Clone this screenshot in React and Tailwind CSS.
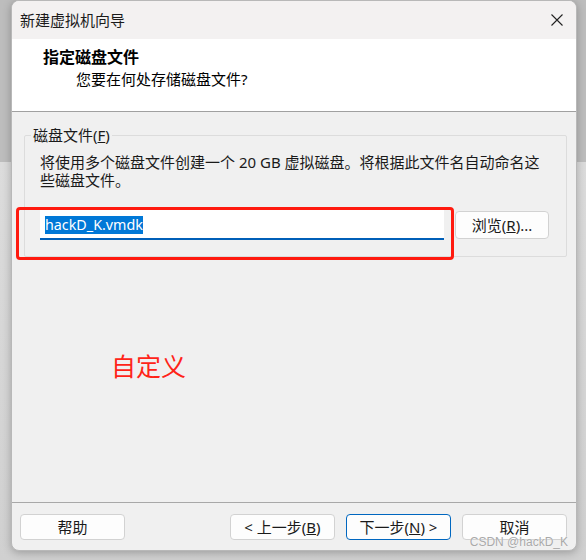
export default function App() {
  const font = { fontFamily: '"Noto Sans", "Noto Sans CJK SC", sans-serif' };
  return (
    <div
      className="w-[586px] h-[560px] overflow-hidden bg-[linear-gradient(to_bottom,#bdbdbd_162px,#dcdcdc_162px,#d0d0d0_100%)] pl-[11px]"
      style={font}
    >
      <div className="relative w-[566px] h-[551px] rounded-[8px] bg-[#f0f0f0] border border-[#b8b8b8] shadow-[0_2px_8px_rgba(0,0,0,0.25)] overflow-hidden flex flex-col text-[#1a1a1a]">
        {/* title bar */}
        <div className="h-[38px] shrink-0 bg-[#f3f1f1] flex items-center justify-between pl-[8px] pr-[13px]">
          <span className="text-[15px] leading-[18px] text-[#1b1b1b]">新建虚拟机向导</span>
          <svg width="12" height="12" viewBox="0 0 12 12" className="block">
            <path d="M0.5 0.5 L11.5 11.5 M11.5 0.5 L0.5 11.5" stroke="#222" strokeWidth="1.1" fill="none" />
          </svg>
        </div>
        {/* header */}
        <div className="h-[72px] shrink-0 bg-white flex flex-col pt-[8px]">
          <div className="pl-[31px] text-[16px] leading-[20px] font-bold text-black">指定磁盘文件</div>
          <div className="pl-[64px] mt-[2px] text-[15px] leading-[20px] text-black">您要在何处存储磁盘文件?</div>
        </div>
        <div className="h-px shrink-0 bg-[#a0a0a0]"></div>
        {/* body */}
        <div className="flex-1 flex flex-col pl-[12px] pr-[9px] pt-[13px]">
          <fieldset className="border border-[#dcdcdc] rounded-[2px] px-0 pb-[16px] m-0">
            <legend className="ml-[6px] px-[2px] text-[15px] leading-[20px] text-[#1a1a1a]">
              磁盘文件(<span className="underline">F</span>)
            </legend>
            <div className="px-[15px]">
              <div className="mt-[8px] text-[15px] leading-[18px] text-[#1a1a1a] whitespace-nowrap">
                将使用多个磁盘文件创建一个 20 GB 虚拟磁盘。将根据此文件名自动命名这
                <br />
                些磁盘文件。
              </div>
              <div className="mt-[21px] flex items-center gap-[11px]">
                <div className="shrink-0 w-[404px] h-[30px] bg-white border-b-2 border-[#005fb8] flex items-center pl-[5px] pt-[1px]">
                  <span className="bg-[#0078d7] text-white text-[14.3px] leading-[18px]">hackD_K.vmdk</span>
                </div>
                <div className="shrink-0 w-[94px] h-[28px] bg-[#fdfdfd] border border-[#d2d2d2] rounded-[4px] flex items-center justify-center text-[15px] text-[#1a1a1a]">
                  浏览(<span className="underline">R</span>)...
                </div>
              </div>
            </div>
          </fieldset>
          <div className="ml-[87px] mt-[94px] text-[25px] leading-[28px] text-[#ff2418]" style={{ fontFamily: '"Noto Sans CJK SC", sans-serif' }}>
            自定义
          </div>
        </div>
        <div className="h-px shrink-0 bg-[#a8a8a8]"></div>
        {/* footer */}
        <div className="h-[47px] shrink-0 flex items-start pt-[11px] pl-[8px] pr-[9px]">
          <div className="w-[105px] h-[26px] bg-[#fdfdfd] border border-[#d2d2d2] rounded-[4px] flex items-center justify-center text-[15px]">
            帮助
          </div>
          <div className="flex-1"></div>
          <div className="w-[105px] h-[26px] bg-[#fdfdfd] border border-[#d2d2d2] rounded-[4px] flex items-center justify-center text-[15px]">
            &lt; 上一步(<span className="underline">B</span>)
          </div>
          <div className="ml-[11px] w-[105px] h-[26px] bg-[#fdfdfd] border border-[#0067c0] rounded-[4px] flex items-center justify-center text-[15px]">
            下一步(<span className="underline">N</span>) &gt;
          </div>
          <div className="ml-[11px] w-[105px] h-[26px] bg-[#fdfdfd] border border-[#d2d2d2] rounded-[4px] flex items-center justify-center text-[15px]">
            取消
          </div>
        </div>
        {/* red annotation box */}
        <div className="absolute left-[4px] top-[206px] w-[438px] h-[53px] border-[3px] border-[#ff1a0f] rounded-[4px]"></div>
        {/* watermark */}
        <div
          className="absolute right-[8px] bottom-[0px] text-[12px] leading-[15px] text-[#a9a9a9] [text-shadow:0_0_1px_#fff]"
          style={{ fontFamily: '"Liberation Sans", sans-serif' }}
        >
          CSDN @hackD_K
        </div>
      </div>
    </div>
  );
}
